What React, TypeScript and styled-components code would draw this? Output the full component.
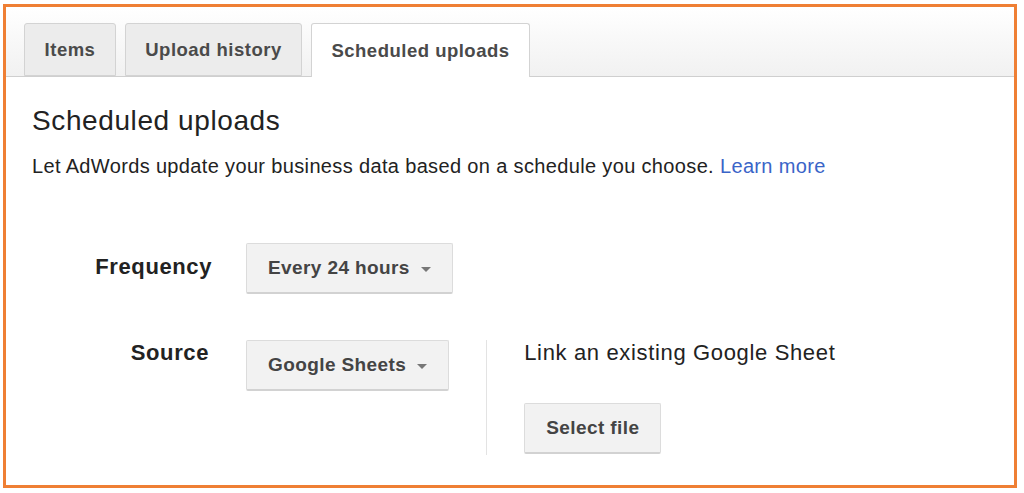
import React from "react";
import styled, { createGlobalStyle } from "styled-components";

const Global = createGlobalStyle`
  html, body { margin: 0; padding: 0; background: #ffffff; }
  body { font-family: "Liberation Sans", Arial, sans-serif; color: #222; }
`;

const Frame = styled.div`
  box-sizing: border-box;
  margin: 4px 0 0 3px;
  width: 1014px;
  height: 484px;
  border: 3px solid #ef7f34;
  background: #fff;
  display: flex;
  flex-direction: column;
  overflow: hidden;
`;

const TabStrip = styled.div`
  display: flex;
  align-items: flex-end;
  gap: 9px;
  height: 70px;
  padding-left: 18px;
  background: linear-gradient(#ffffff, #f1f1f1);
  border-bottom: 1px solid #cfcfcf;
  box-sizing: border-box;
`;

const Tab = styled.div<{ $active?: boolean; $w: number }>`
  box-sizing: border-box;
  height: ${(p) => (p.$active ? "54px" : "53px")};
  margin-bottom: ${(p) => (p.$active ? "-1px" : "0")};
  width: ${(p) => p.$w}px;
  display: flex;
  align-items: center;
  justify-content: center;
  border: 1px solid #d3d3d3;
  border-bottom: ${(p) => (p.$active ? "none" : "1px solid #d3d3d3")};
  border-radius: 3px 3px 0 0;
  background: ${(p) => (p.$active ? "#ffffff" : "#ececec")};
  font-size: 18.5px;
  letter-spacing: 0.5px;
  font-weight: bold;
  color: #4a4a4a;
  padding-top: ${(p) => (p.$active ? "1px" : "1px")};
`;

const Content = styled.div`
  padding: 29px 0 0 26px;
  display: flex;
  flex-direction: column;
`;

const Heading = styled.h1`
  margin: 0;
  font-size: 28px;
  letter-spacing: 0.6px;
  font-weight: normal;
  line-height: 30px;
  color: #222;
`;

const Description = styled.p`
  margin: 18px 0 0 0;
  font-size: 20px;
  letter-spacing: 0.35px;
  line-height: 24px;
  color: #222;
`;

const Link = styled.a`
  color: #3a64c8;
  text-decoration: none;
`;

const Form = styled.div`
  margin-top: 65px;
  display: grid;
  grid-template-columns: 180px auto 1fr;
  column-gap: 34px;
  row-gap: 46px;
`;

const Label = styled.div<{ $offset: number; $inset: number }>`
  font-size: 22px;
  letter-spacing: 0.6px;
  font-weight: bold;
  color: #222;
  text-align: right;
  line-height: 24px;
  padding-top: ${(p) => p.$offset}px;
  padding-right: ${(p) => p.$inset}px;
`;

const Cell = styled.div`
  display: flex;
  align-items: flex-start;
`;

const GrayButton = styled.div`
  box-sizing: border-box;
  height: 51px;
  padding: 0 21px;
  display: inline-flex;
  align-items: center;
  gap: 11px;
  background: #f2f2f2;
  border: 1px solid #dcdcdc;
  border-bottom: 2px solid #d2d2d2;
  border-radius: 2px;
  font-size: 19px;
  letter-spacing: 0.4px;
  font-weight: bold;
  color: #444;
  white-space: nowrap;
`;

const Caret = styled.span`
  width: 0;
  height: 0;
  border-left: 5px solid transparent;
  border-right: 5px solid transparent;
  border-top: 5px solid #777;
  margin-top: 2px;
`;

const SourceRow = styled.div`
  display: flex;
  align-items: flex-start;
`;

const Divider = styled.div`
  width: 1px;
  background: #e3e3e3;
  margin: 0 37px;
  height: 115px;
`;

const SidePanel = styled.div`
  display: flex;
  flex-direction: column;
  align-items: flex-start;
  gap: 38px;
`;

const SideText = styled.div`
  font-size: 22px;
  letter-spacing: 0.65px;
  line-height: 24px;
  color: #222;
  padding-top: 1px;
`;

export default function App() {
  return (
    <>
      <Global />
      <Frame>
        <TabStrip>
          <Tab $w={92}>Items</Tab>
          <Tab $w={177}>Upload history</Tab>
          <Tab $active $w={219}>Scheduled uploads</Tab>
        </TabStrip>
        <Content>
          <Heading>Scheduled uploads</Heading>
          <Description>
            Let AdWords update your business data based on a schedule you choose.{" "}
            <Link href="#">Learn more</Link>
          </Description>
          <Form>
            <Label $offset={12} $inset={0}>Frequency</Label>
            <Cell>
              <GrayButton>
                Every 24 hours <Caret />
              </GrayButton>
            </Cell>
            <div />
            <Label $offset={1} $inset={3}>Source</Label>
            <Cell>
              <SourceRow>
                <GrayButton>
                  Google Sheets <Caret />
                </GrayButton>
                <Divider />
                <SidePanel>
                  <SideText>Link an existing Google Sheet</SideText>
                  <GrayButton>Select file</GrayButton>
                </SidePanel>
              </SourceRow>
            </Cell>
            <div />
          </Form>
        </Content>
      </Frame>
    </>
  );
}
